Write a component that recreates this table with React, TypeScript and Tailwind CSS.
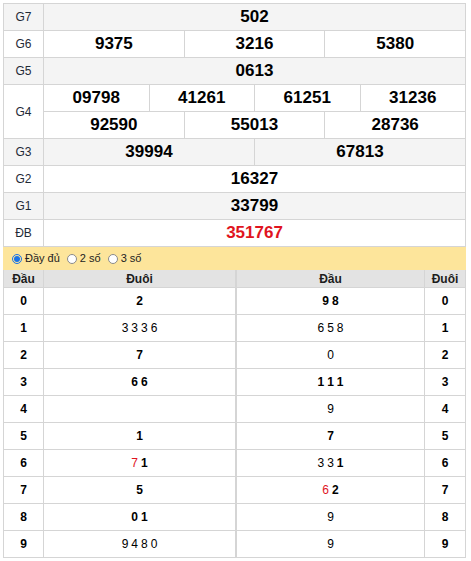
import React from "react";

const line = "border-[#d5d5d5]";

type Prize = { label: string; rows: string[][]; red?: boolean };

const prizes: Prize[] = [
  { label: "G7", rows: [["502"]] },
  { label: "G6", rows: [["9375", "3216", "5380"]] },
  { label: "G5", rows: [["0613"]] },
  { label: "G4", rows: [["09798", "41261", "61251", "31236"], ["92590", "55013", "28736"]] },
  { label: "G3", rows: [["39994", "67813"]] },
  { label: "G2", rows: [["16327"]] },
  { label: "G1", rows: [["33799"]] },
  { label: "ĐB", rows: [["351767"]], red: true },
];

// each digit: [value, bold, red]
type D = [string, boolean?, boolean?];

const heads: D[][] = [
  [["2", true]],
  [["3"], ["3"], ["3"], ["6"]],
  [["7", true]],
  [["6", true], ["6", true]],
  [],
  [["1", true]],
  [["7", false, true], ["1", true]],
  [["5", true]],
  [["0", true], ["1", true]],
  [["9"], ["4"], ["8"], ["0"]],
];

const tails: D[][] = [
  [["9", true], ["8", true]],
  [["6"], ["5"], ["8"]],
  [["0"]],
  [["1", true], ["1", true], ["1", true]],
  [["9"]],
  [["7", true]],
  [["3"], ["3"], ["1", true]],
  [["6", false, true], ["2", true]],
  [["9"]],
  [["9"]],
];

function Digits({ list }: { list: D[] }) {
  return (
    <span className="flex gap-[3px]">
      {list.map((d, i) => (
        <span
          key={i}
          className={`${d[1] ? "font-bold" : "font-normal"} ${d[2] ? "text-[#e0141e]" : "text-black"}`}
        >
          {d[0]}
        </span>
      ))}
    </span>
  );
}

function Radio({ checked, label }: { checked?: boolean; label: string }) {
  return (
    <label className="flex items-center gap-[3px]">
      <span
        className={`flex h-[10px] w-[10px] items-center justify-center rounded-full border ${
          checked ? "border-[#1a73e8]" : "border-[#8a8a8a] bg-white"
        }`}
      >
        {checked && <span className="h-[6px] w-[6px] rounded-full bg-[#1a73e8]" />}
      </span>
      <span>{label}</span>
    </label>
  );
}

export default function App() {
  return (
    <div className="min-h-[561px] bg-white pl-[3px] pt-[3px]" style={{ fontFamily: '"Liberation Sans", Arial, sans-serif' }}>
      <div className={`w-[463px] border-l border-t ${line}`}>
        {prizes.map((p, i) => (
          <div key={p.label} className={`flex ${i % 2 === 0 ? "bg-[#f4f4f4]" : "bg-white"}`}>
            <div className={`flex w-[40px] shrink-0 items-center justify-center border-r border-b ${line} text-[12px] text-[#1f2a36]`}>
              {p.label}
            </div>
            <div className="flex flex-1 flex-col">
              {p.rows.map((r, j) => (
                <div key={j} className="flex">
                  {r.map((n) => (
                    <div
                      key={n}
                      className={`flex h-[27px] flex-1 items-center justify-center border-r border-b ${line} text-[17px] font-bold ${
                        p.red ? "text-[#e0141e]" : "text-black"
                      }`}
                    >
                      {n}
                    </div>
                  ))}
                </div>
              ))}
            </div>
          </div>
        ))}
      </div>

      <div className="flex h-[23px] w-[463px] items-center gap-[7px] bg-[#fde59b] pl-[9px] text-[11px] text-[#222]">
        <Radio checked label="Đầy đủ" />
        <Radio label="2 số" />
        <Radio label="3 số" />
      </div>

      <div className="flex w-[463px]">
        <div className={`flex w-[233px] flex-col border-l ${line}`}>
          <div className={`flex h-[18px] bg-[#e3e3e3] text-[12px] font-bold text-[#1d1d1d]`}>
            <div className={`flex w-[40px] items-center justify-center border-r border-b ${line}`}>Đầu</div>
            <div className={`flex flex-1 items-center justify-center border-r border-b ${line}`}>Đuôi</div>
          </div>
          {heads.map((h, i) => (
            <div key={i} className="flex h-[27px] text-[12px]">
              <div className={`flex w-[40px] items-center justify-center border-r border-b ${line} font-bold`}>{i}</div>
              <div className={`flex flex-1 items-center justify-center border-r border-b ${line}`}>
                <Digits list={h} />
              </div>
            </div>
          ))}
        </div>
        <div className={`flex w-[230px] flex-col border-l ${line}`}>
          <div className={`flex h-[18px] bg-[#e3e3e3] text-[12px] font-bold text-[#1d1d1d]`}>
            <div className={`flex flex-1 items-center justify-center border-r border-b ${line}`}>Đầu</div>
            <div className={`flex w-[41px] items-center justify-center border-r border-b ${line}`}>Đuôi</div>
          </div>
          {tails.map((t, i) => (
            <div key={i} className="flex h-[27px] text-[12px]">
              <div className={`flex flex-1 items-center justify-center border-r border-b ${line}`}>
                <Digits list={t} />
              </div>
              <div className={`flex w-[41px] items-center justify-center border-r border-b ${line} font-bold`}>{i}</div>
            </div>
          ))}
        </div>
      </div>
    </div>
  );
}
